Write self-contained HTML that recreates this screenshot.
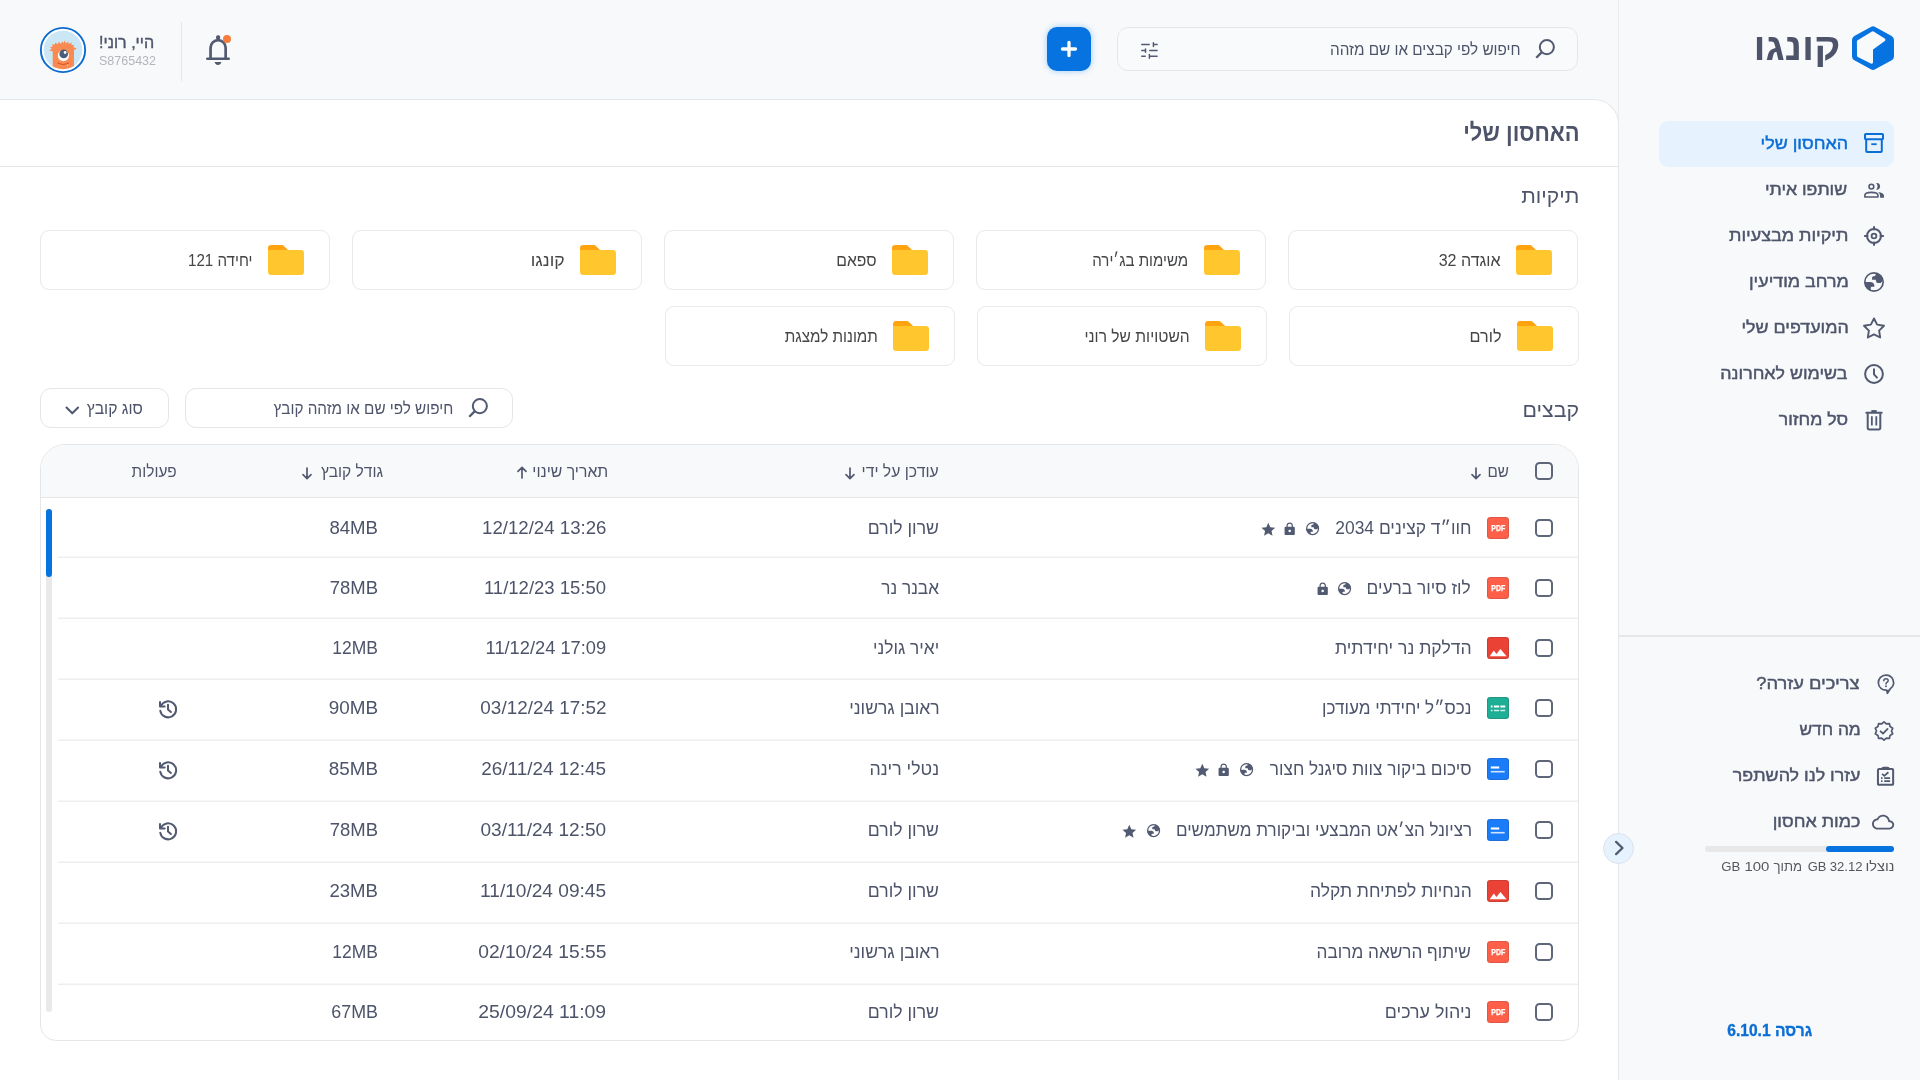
<!DOCTYPE html>
<html lang="he"><head><meta charset="utf-8"><title>קונגו</title>
<style>
html,body{margin:0;padding:0}
html{overflow:hidden;width:1920px;height:1080px}
body{width:1920px;height:1080px;overflow:hidden;position:relative;background:#f8f9fb;font-family:"Liberation Sans",sans-serif;direction:rtl;color:#4d546a}
svg{display:block;overflow:visible}
</style></head><body><div style="position:absolute;left:0;top:0;width:1920px;height:1080px;overflow:hidden;will-change:transform;filter:blur(0.4px)">
<div style="position:absolute;left:1618px;top:0px;width:1px;height:1080px;background:#ebecee"></div>
<div style="position:absolute;left:0;top:99px;width:1619px;height:981px;background:#fff;border:1px solid #e5e6e8;border-left:none;border-bottom:none;border-top-right-radius:25px;box-sizing:border-box"></div>
<div style="position:absolute;left:0px;top:166px;width:1618px;height:1px;background:#e5e6e8"></div>
<svg style="position:absolute;left:1852px;top:25.8px;" width="42" height="44.2" viewBox="0 0 42 44.200"><path d="M21.00 4.84 L37.50 13.96 L37.50 30.24 L21.00 39.36 L4.50 30.24 L4.50 13.96 Z" fill="#0673e1" stroke="#0673e1" stroke-width="9" stroke-linejoin="round"/><path d="M20.79 6.77 L31.92 13.78 L19.50 22.73 L19.50 36.17 L6.49 29.67 L6.41 15.63 Z" fill="#f8f9fb" stroke="#f8f9fb" stroke-width="3" stroke-linejoin="round"/></svg>
<span style="position:absolute;top:28.02px;font-size:38px;line-height:38px;white-space:nowrap;color:#4d546a;font-weight:700;right:79.69px;transform:scaleX(1.0545);transform-origin:right center">קונגו</span>
<div style="position:absolute;left:1659px;top:121px;width:235px;height:46px;background:#e6f2fe;border-radius:9px"></div>
<span style="position:absolute;top:136.02px;font-size:16.6px;line-height:16.6px;white-space:nowrap;color:#0b6ed6;-webkit-text-stroke:0.45px #0b6ed6;right:71.62px;transform:scaleX(1.0800);transform-origin:right center">האחסון שלי</span>
<span style="position:absolute;top:182.03px;font-size:16.6px;line-height:16.6px;white-space:nowrap;color:#4d546a;-webkit-text-stroke:0.45px #4d546a;right:72.70px;transform:scaleX(1.0658);transform-origin:right center">שותפו איתי</span>
<span style="position:absolute;top:228.02px;font-size:16.6px;line-height:16.6px;white-space:nowrap;color:#4d546a;-webkit-text-stroke:0.45px #4d546a;right:71.62px;transform:scaleX(1.0817);transform-origin:right center">תיקיות מבצעיות</span>
<span style="position:absolute;top:274.02px;font-size:16.6px;line-height:16.6px;white-space:nowrap;color:#4d546a;-webkit-text-stroke:0.45px #4d546a;right:71.62px;transform:scaleX(1.0758);transform-origin:right center">מרחב מודיעין</span>
<span style="position:absolute;top:320.02px;font-size:16.6px;line-height:16.6px;white-space:nowrap;color:#4d546a;-webkit-text-stroke:0.45px #4d546a;right:71.62px;transform:scaleX(1.0755);transform-origin:right center">המועדפים שלי</span>
<span style="position:absolute;top:366.02px;font-size:16.6px;line-height:16.6px;white-space:nowrap;color:#4d546a;-webkit-text-stroke:0.45px #4d546a;right:72.70px;transform:scaleX(1.0737);transform-origin:right center">בשימוש לאחרונה</span>
<span style="position:absolute;top:412.03px;font-size:16.6px;line-height:16.6px;white-space:nowrap;color:#4d546a;-webkit-text-stroke:0.45px #4d546a;right:71.83px;transform:scaleX(1.0646);transform-origin:right center">סל מחזור</span>
<svg style="position:absolute;left:1864px;top:133px;" width="20" height="20" viewBox="0 0 20 20"><rect x="1" y="1" width="18" height="5.2" rx="0.8" fill="none" stroke="#0b6ed6" stroke-width="2"/><path d="M2.2 6.2 V18 Q2.2 19 3.2 19 H16.8 Q17.8 19 17.8 18 V6.2" fill="none" stroke="#0b6ed6" stroke-width="2"/><path d="M7.3 11.2 H12.7" stroke="#0b6ed6" stroke-width="1.8"/></svg>
<svg style="position:absolute;left:1864px;top:183px;" width="20" height="15" viewBox="0 0 20 15"><circle cx="12.700" cy="3.350" r="3.350" fill="#525a71"/><circle cx="8.600" cy="3.350" r="4.900" fill="#f8f9fb"/><circle cx="7.400" cy="3.600" r="2.400" fill="none" stroke="#525a71" stroke-width="1.600"/><path d="M0.800 14 V12.400 Q0.800 9.400 7.400 9.400 Q14 9.400 14 12.400 V14 Z" fill="none" stroke="#525a71" stroke-width="1.600" stroke-linejoin="round"/><path d="M14.200 9.100 Q19.600 9.600 20 12.800 V14.700 H16.100 V12.800 Q16.100 10.600 14.200 9.100 Z" fill="#525a71"/></svg>
<svg style="position:absolute;left:1864px;top:226px;" width="20" height="20" viewBox="0 0 20 20"><circle cx="10" cy="10" r="7" fill="none" stroke="#525a71" stroke-width="2"/><circle cx="10" cy="10" r="2.4" fill="none" stroke="#525a71" stroke-width="1.8"/><path d="M10 0.900 V3.600 M10 16.400 V19.100 M0.900 10 H3.600 M16.400 10 H19.100" stroke="#525a71" stroke-width="2" stroke-linecap="round"/></svg>
<svg style="position:absolute;left:1864px;top:272px;" width="20" height="20" viewBox="0 0 20 20"><clipPath id="gc1"><circle cx="10" cy="10" r="9.600"/></clipPath><circle cx="10" cy="10" r="9.175" fill="none" stroke="#525a71" stroke-width="1.65"/><g clip-path="url(#gc1)" fill="#525a71"><path d="M12.300 -1 L11.500 2.900 Q11.200 4.100 10 4.150 L9.400 4.200 Q8.100 4.400 8.050 5.800 V7.800 H11.800 L12 9.300 Q12.300 10.900 13.700 10.900 H16.800 L21 6 V-1 Z"/><path d="M-1 10.100 H6.700 Q9.600 10.100 10.200 12.600 L10.450 14.750 H8 Q6.850 14.800 6.800 16 L6.700 21 H-1 Z"/></g></svg>
<svg style="position:absolute;left:1861px;top:314.6px;" width="26" height="26" viewBox="0 0 24 24"><path fill="none" stroke="#525a71" stroke-width="1.750" stroke-linejoin="round" d="M12.00 3.20 L14.91 8.90 L21.23 9.90 L16.71 14.43 L17.70 20.75 L12.00 17.85 L6.30 20.75 L7.29 14.43 L2.77 9.90 L9.09 8.90 Z"/></svg>
<svg style="position:absolute;left:1864px;top:364px;" width="20" height="20" viewBox="0 0 20 20"><circle cx="10" cy="10" r="8.9" fill="none" stroke="#525a71" stroke-width="2"/><path d="M10 5.2 V10.3 L13 13.6" fill="none" stroke="#525a71" stroke-width="2" stroke-linecap="round" stroke-linejoin="round"/></svg>
<svg style="position:absolute;left:1864px;top:409.5px;" width="20" height="20.5" viewBox="0 0 20 20.500"><path d="M7.300 1.100 H12.700" stroke="#525a71" stroke-width="2"/><path d="M2.300 2.750 H17.700" stroke="#525a71" stroke-width="1.900" stroke-linecap="round"/><path d="M3.700 3.200 V17.700 Q3.700 19.400 5.400 19.400 H14.600 Q16.300 19.400 16.300 17.700 V3.200" fill="none" stroke="#525a71" stroke-width="2"/><path d="M7.850 6.300 V15.500 M12.300 6.300 V15.500" stroke="#525a71" stroke-width="1.800"/></svg>
<div style="position:absolute;left:1619px;top:635px;width:301px;height:2px;background:#e4e6ea"></div>
<span style="position:absolute;top:676.02px;font-size:16.6px;line-height:16.6px;white-space:nowrap;color:#4d546a;-webkit-text-stroke:0.45px #4d546a;right:60.30px;transform:scaleX(1.1047);transform-origin:right center">צריכים עזרה?</span>
<span style="position:absolute;top:722.03px;font-size:16.6px;line-height:16.6px;white-space:nowrap;color:#4d546a;-webkit-text-stroke:0.45px #4d546a;right:59.26px;transform:scaleX(1.0431);transform-origin:right center">מה חדש</span>
<span style="position:absolute;top:768.02px;font-size:16.6px;line-height:16.6px;white-space:nowrap;color:#4d546a;-webkit-text-stroke:0.45px #4d546a;right:59.53px;transform:scaleX(1.0779);transform-origin:right center">עזרו לנו להשתפר</span>
<span style="position:absolute;top:814.02px;font-size:16.6px;line-height:16.6px;white-space:nowrap;color:#4d546a;-webkit-text-stroke:0.45px #4d546a;right:59.48px;transform:scaleX(1.0781);transform-origin:right center">כמות אחסון</span>
<svg style="position:absolute;left:1876.5px;top:673.5px;" width="18" height="21" viewBox="0 0 18 21"><path d="M9 1.100 A7.500 7.500 0 1 0 9.700 16.050 L10.400 19.300 L13.300 14.750 A7.500 7.500 0 0 0 9 1.100 Z" fill="none" stroke="#525a71" stroke-width="1.700" stroke-linejoin="round"/><path d="M9.900 16.300 L10.400 19.200 L12.900 15.200 Z" fill="#525a71"/><path d="M6.800 6.700 Q6.900 4.700 9 4.700 Q11.200 4.700 11.200 6.500 Q11.200 7.600 9.900 8.400 Q9 9 9 10.100" fill="none" stroke="#525a71" stroke-width="1.500" stroke-linecap="round"/><circle cx="9" cy="12.300" r="0.950" fill="#525a71"/></svg>
<svg style="position:absolute;left:1874px;top:720.5px;" width="20" height="20" viewBox="0 0 20 20"><path d="M10.00 0.80 L12.32 2.87 L15.41 2.56 L16.07 5.59 L18.75 7.16 L17.50 10.00 L18.75 12.84 L16.07 14.41 L15.41 17.44 L12.32 17.13 L10.00 19.20 L7.68 17.13 L4.59 17.44 L3.93 14.41 L1.25 12.84 L2.50 10.00 L1.25 7.16 L3.93 5.59 L4.59 2.56 L7.68 2.87 Z" fill="none" stroke="#525a71" stroke-width="1.7" stroke-linejoin="round"/><path d="M6.600 10.300 L9 12.600 L13.600 7.900" fill="none" stroke="#525a71" stroke-width="1.8" stroke-linecap="round" stroke-linejoin="round"/></svg>
<svg style="position:absolute;left:1877px;top:765.7px;" width="17.1" height="20.3" viewBox="0 0 18 20.5"><rect x="1" y="2.800" width="16" height="16.600" rx="1" fill="none" stroke="#525a71" stroke-width="2.100"/><path d="M4.600 2.400 Q4.600 0.300 6.800 0.300 H11.200 Q13.400 0.300 13.400 2.400 V3.900 H4.600 Z" fill="#525a71"/><path d="M5.400 7.900 L7.600 9.900 L12 6.100" fill="none" stroke="#525a71" stroke-width="1.900"/><path d="M4.200 12.300 H5.800 M7.600 12.300 H13.800 M4.200 15.500 H5.800 M7.600 15.500 H13.800" stroke="#525a71" stroke-width="1.700"/></svg>
<svg style="position:absolute;left:1872px;top:811.2px;" width="22.2" height="22.2" viewBox="0 0 24 24"><path fill="#525a71" d="M19.35 10.04C18.67 6.59 15.64 4 12 4 9.11 4 6.6 5.64 5.35 8.04 2.34 8.36 0 10.91 0 14c0 3.31 2.69 6 6 6h13c2.76 0 5-2.24 5-5 0-2.64-2.05-4.78-4.65-4.96zM19 18H6c-2.21 0-4-1.79-4-4 0-2.05 1.53-3.76 3.56-3.97l1.07-.11.5-.95C8.08 7.14 9.94 6 12 6c2.62 0 4.88 1.86 5.39 4.43l.3 1.5 1.53.11c1.56.1 2.78 1.41 2.78 2.96 0 1.65-1.35 3-3 3z"/></svg>
<div style="position:absolute;left:1705px;top:846px;width:189px;height:6px;background:#e8e8e8;border-radius:3px"></div>
<div style="position:absolute;left:1826px;top:846px;width:68px;height:6px;background:#0673e1;border-radius:3px"></div>
<span style="position:absolute;top:860.03px;font-size:13.4px;line-height:13.4px;white-space:nowrap;color:#55575c;right:25.41px;transform:scaleX(1.0921);transform-origin:right center">נוצלו</span>
<span style="position:absolute;top:860.03px;font-size:13.4px;line-height:13.4px;white-space:nowrap;color:#55575c;direction:ltr;right:57.04px;transform:scaleX(0.9805);transform-origin:right center">32.12</span>
<span style="position:absolute;top:860.03px;font-size:13.4px;line-height:13.4px;white-space:nowrap;color:#55575c;direction:ltr;right:93.58px;transform:scaleX(0.9644);transform-origin:right center">GB</span>
<span style="position:absolute;top:860.03px;font-size:13.4px;line-height:13.4px;white-space:nowrap;color:#55575c;right:117.77px;transform:scaleX(0.9821);transform-origin:right center">מתוך</span>
<span style="position:absolute;top:860.03px;font-size:13.4px;line-height:13.4px;white-space:nowrap;color:#55575c;direction:ltr;right:150.31px;transform:scaleX(1.1154);transform-origin:right center">100</span>
<span style="position:absolute;top:860.03px;font-size:13.4px;line-height:13.4px;white-space:nowrap;color:#55575c;direction:ltr;right:179.41px;transform:scaleX(0.9837);transform-origin:right center">GB</span>
<div style="position:absolute;left:1603px;top:832.5px;width:31px;height:31px;border-radius:50%;background:#e6f2fe;border:1px solid #dde2e9;box-sizing:border-box"></div>
<svg style="position:absolute;left:1608.5px;top:838px;" width="20" height="20" viewBox="0 0 20 20"><path d="M7.100 3.900 L13.500 10 L7.100 16.100" fill="none" stroke="#525a71" stroke-width="2.300" stroke-linecap="round" stroke-linejoin="round"/></svg>
<span style="position:absolute;top:1023.03px;font-size:16px;line-height:16px;white-space:nowrap;color:#0b6ed6;font-weight:700;-webkit-text-stroke:0.35px #0b6ed6;right:107.50px;transform:scaleX(0.9741);transform-origin:right center">גרסה 6.10.1</span>
<div style="position:absolute;left:1117px;top:27px;width:461px;height:44px;border:1px solid #e5e6e8;border-radius:11px;box-sizing:border-box;background:#f9fafc"></div>
<svg style="position:absolute;left:1534px;top:36.8px;" width="24" height="24" viewBox="0 0 24 24"><circle cx="12.850" cy="10.100" r="7.050" fill="none" stroke="#525a71" stroke-width="2"/><path d="M7.900 15.100 L2.250 20.750" stroke="#525a71" stroke-width="2.300" stroke-linecap="butt"/></svg>
<span style="position:absolute;top:42.03px;font-size:16px;line-height:16px;white-space:nowrap;color:#4d546a;right:399.65px;transform:scaleX(0.9548);transform-origin:right center">חיפוש לפי קבצים או שם מזהה</span>
<svg style="position:absolute;left:1140px;top:41px;" width="19" height="19" viewBox="0 0 19 19"><path d="M1.800 3.400 H9.200 M13.400 3.400 H17.100 M13.400 1.800 V5.400 M1.800 9.400 H5.500 M5.500 8 V11.200 M9.750 9.400 H17.100 M1.800 15.300 H5.200 M9.400 13.600 V17.150 M9.400 15.300 H17.100" fill="none" stroke="#525a71" stroke-width="1.500" stroke-linecap="round"/></svg>
<div style="position:absolute;left:1047px;top:27px;width:44px;height:44px;border-radius:10px;background:#0673e1;box-shadow:0 0 6px 0 rgba(30,140,245,.42)"></div>
<svg style="position:absolute;left:1059px;top:39px;" width="20" height="20" viewBox="0 0 20 20"><path d="M10 3.500 V16.500 M3.500 10 H16.500" stroke="#fff" stroke-width="3.300" stroke-linecap="round"/></svg>
<svg style="position:absolute;left:204px;top:33px;" width="28" height="34" viewBox="0 0 28 34"><path d="M6.550 25.500 V14.700 A7.550 7.550 0 0 1 21.650 14.700 V25.500" fill="none" stroke="#525a71" stroke-width="2.700"/><path d="M3.350 25.750 H24.650" stroke="#525a71" stroke-width="2.700" stroke-linecap="round"/><rect x="12.050" y="2.200" width="4.100" height="4.600" rx="1.700" fill="#525a71"/><path d="M10.600 29 H17.400 Q16.600 31.900 14 31.900 Q11.400 31.900 10.600 29 Z" fill="#525a71"/></svg>
<div style="position:absolute;left:223px;top:35px;width:8px;height:8px;border-radius:50%;background:#f67d3c"></div>
<div style="position:absolute;left:180.5px;top:22px;width:1.5px;height:59px;background:#e4e6ea"></div>
<span style="position:absolute;top:34.02px;font-size:17px;line-height:17px;white-space:nowrap;color:#4d546a;-webkit-text-stroke:0.4px #4d546a;left:99.05px;transform:scaleX(0.9462);transform-origin:left center">היי, רוני!</span>
<span style="position:absolute;top:55.04px;font-size:12.2px;line-height:12.2px;white-space:nowrap;color:#b3b5bb;direction:ltr;left:99.34px;transform:scaleX(1.0257);transform-origin:left center">S8765432</span>
<svg style="position:absolute;left:40px;top:27px;" width="46" height="46" viewBox="0 0 46 46"><circle cx="23" cy="23" r="22.150" fill="#fff" stroke="#0b6ad2" stroke-width="1.900"/><circle cx="23" cy="23" r="19.300" fill="#cbe6f5"/><clipPath id="avc"><circle cx="23" cy="23" r="19.300"/></clipPath><g clip-path="url(#avc)"><path d="M12.700 46 V24.200 L9.200 23.600 L11.900 21.700 L9.800 20.200 L12.800 19.500 L11.900 17.400 L14.800 17.600 L15.300 15.400 L17.600 17.200 L18.800 14.800 L20.700 16.900 L22.300 14.200 L23.600 16.600 L24.500 13.200 L25.900 16.500 L28.100 14.500 L28.700 17 L31.600 15.600 L31.500 18.200 L34 17.800 L33.300 20 L36.800 21.800 L34 23 V46 Z" fill="#f98a51"/><circle cx="23.400" cy="28.600" r="5.600" fill="#fff"/><circle cx="23.700" cy="26.900" r="4.300" fill="#4a5d78"/><circle cx="25.100" cy="25.500" r="1.400" fill="#fff"/><path d="M17.900 36.100 Q23 38.900 28.700 36.100" fill="none" stroke="#e2512a" stroke-width="1.100" stroke-linecap="round"/><circle cx="27.500" cy="38.300" r="0.700" fill="#fbd9a5"/></g></svg>
<span style="position:absolute;top:121.03px;font-size:24.2px;line-height:24.2px;white-space:nowrap;color:#4d546a;font-weight:700;right:340.55px;transform:scaleX(0.9049);transform-origin:right center">האחסון שלי</span>
<span style="position:absolute;top:186.03px;font-size:20.8px;line-height:20.8px;white-space:nowrap;color:#4d546a;right:340.38px;transform:scaleX(1.0126);transform-origin:right center">תיקיות</span>
<span style="position:absolute;top:400.03px;font-size:20.8px;line-height:20.8px;white-space:nowrap;color:#4d546a;right:341.17px;transform:scaleX(1.0272);transform-origin:right center">קבצים</span>
<div style="position:absolute;left:1288px;top:230px;width:290px;height:60px;border:1px solid #e8e9ec;border-radius:9px;box-sizing:border-box;background:#fff"></div>
<svg style="position:absolute;left:1516px;top:245px;" width="36" height="30" viewBox="0 0 36 30"><path d="M0 3.300 Q0 0 3.300 0 H13.800 Q15 0 15.900 0.900 L20.500 5.600 H0 Z" fill="#ffa30f"/><path d="M0 5 H32.700 Q36 5 36 8.300 V26.700 Q36 30 32.700 30 H3.300 Q0 30 0 26.700 Z" fill="#ffc62d"/></svg>
<span style="position:absolute;top:252.02px;font-size:17px;line-height:17px;white-space:nowrap;color:#444547;right:419.84px;transform:scaleX(0.9439);transform-origin:right center">אוגדה 32</span>
<div style="position:absolute;left:976px;top:230px;width:290px;height:60px;border:1px solid #e8e9ec;border-radius:9px;box-sizing:border-box;background:#fff"></div>
<svg style="position:absolute;left:1204px;top:245px;" width="36" height="30" viewBox="0 0 36 30"><path d="M0 3.300 Q0 0 3.300 0 H13.800 Q15 0 15.900 0.900 L20.500 5.600 H0 Z" fill="#ffa30f"/><path d="M0 5 H32.700 Q36 5 36 8.300 V26.700 Q36 30 32.700 30 H3.300 Q0 30 0 26.700 Z" fill="#ffc62d"/></svg>
<span style="position:absolute;top:252.02px;font-size:17px;line-height:17px;white-space:nowrap;color:#444547;right:731.61px;transform:scaleX(0.8868);transform-origin:right center">משימות בג׳ירה</span>
<div style="position:absolute;left:664px;top:230px;width:290px;height:60px;border:1px solid #e8e9ec;border-radius:9px;box-sizing:border-box;background:#fff"></div>
<svg style="position:absolute;left:892px;top:245px;" width="36" height="30" viewBox="0 0 36 30"><path d="M0 3.300 Q0 0 3.300 0 H13.800 Q15 0 15.900 0.900 L20.500 5.600 H0 Z" fill="#ffa30f"/><path d="M0 5 H32.700 Q36 5 36 8.300 V26.700 Q36 30 32.700 30 H3.300 Q0 30 0 26.700 Z" fill="#ffc62d"/></svg>
<span style="position:absolute;top:252.02px;font-size:17px;line-height:17px;white-space:nowrap;color:#444547;right:1043.57px;transform:scaleX(0.9254);transform-origin:right center">ספאם</span>
<div style="position:absolute;left:352px;top:230px;width:290px;height:60px;border:1px solid #e8e9ec;border-radius:9px;box-sizing:border-box;background:#fff"></div>
<svg style="position:absolute;left:580px;top:245px;" width="36" height="30" viewBox="0 0 36 30"><path d="M0 3.300 Q0 0 3.300 0 H13.800 Q15 0 15.900 0.900 L20.500 5.600 H0 Z" fill="#ffa30f"/><path d="M0 5 H32.700 Q36 5 36 8.300 V26.700 Q36 30 32.700 30 H3.300 Q0 30 0 26.700 Z" fill="#ffc62d"/></svg>
<span style="position:absolute;top:252.02px;font-size:17px;line-height:17px;white-space:nowrap;color:#444547;right:1355.49px;transform:scaleX(1.0386);transform-origin:right center">קונגו</span>
<div style="position:absolute;left:40px;top:230px;width:290px;height:60px;border:1px solid #e8e9ec;border-radius:9px;box-sizing:border-box;background:#fff"></div>
<svg style="position:absolute;left:268px;top:245px;" width="36" height="30" viewBox="0 0 36 30"><path d="M0 3.300 Q0 0 3.300 0 H13.800 Q15 0 15.900 0.900 L20.500 5.600 H0 Z" fill="#ffa30f"/><path d="M0 5 H32.700 Q36 5 36 8.300 V26.700 Q36 30 32.700 30 H3.300 Q0 30 0 26.700 Z" fill="#ffc62d"/></svg>
<span style="position:absolute;top:252.02px;font-size:17px;line-height:17px;white-space:nowrap;color:#444547;right:1667.13px;transform:scaleX(0.8900);transform-origin:right center">יחידה 121</span>
<div style="position:absolute;left:1289px;top:306px;width:290px;height:60px;border:1px solid #e8e9ec;border-radius:9px;box-sizing:border-box;background:#fff"></div>
<svg style="position:absolute;left:1517px;top:321px;" width="36" height="30" viewBox="0 0 36 30"><path d="M0 3.300 Q0 0 3.300 0 H13.800 Q15 0 15.900 0.900 L20.500 5.600 H0 Z" fill="#ffa30f"/><path d="M0 5 H32.700 Q36 5 36 8.300 V26.700 Q36 30 32.700 30 H3.300 Q0 30 0 26.700 Z" fill="#ffc62d"/></svg>
<span style="position:absolute;top:328.02px;font-size:17px;line-height:17px;white-space:nowrap;color:#444547;right:418.64px;transform:scaleX(0.9531);transform-origin:right center">לורם</span>
<div style="position:absolute;left:977px;top:306px;width:290px;height:60px;border:1px solid #e8e9ec;border-radius:9px;box-sizing:border-box;background:#fff"></div>
<svg style="position:absolute;left:1205px;top:321px;" width="36" height="30" viewBox="0 0 36 30"><path d="M0 3.300 Q0 0 3.300 0 H13.800 Q15 0 15.900 0.900 L20.500 5.600 H0 Z" fill="#ffa30f"/><path d="M0 5 H32.700 Q36 5 36 8.300 V26.700 Q36 30 32.700 30 H3.300 Q0 30 0 26.700 Z" fill="#ffc62d"/></svg>
<span style="position:absolute;top:328.02px;font-size:17px;line-height:17px;white-space:nowrap;color:#444547;right:730.58px;transform:scaleX(0.9171);transform-origin:right center">השטויות של רוני</span>
<div style="position:absolute;left:665px;top:306px;width:290px;height:60px;border:1px solid #e8e9ec;border-radius:9px;box-sizing:border-box;background:#fff"></div>
<svg style="position:absolute;left:893px;top:321px;" width="36" height="30" viewBox="0 0 36 30"><path d="M0 3.300 Q0 0 3.300 0 H13.800 Q15 0 15.900 0.900 L20.500 5.600 H0 Z" fill="#ffa30f"/><path d="M0 5 H32.700 Q36 5 36 8.300 V26.700 Q36 30 32.700 30 H3.300 Q0 30 0 26.700 Z" fill="#ffc62d"/></svg>
<span style="position:absolute;top:328.02px;font-size:17px;line-height:17px;white-space:nowrap;color:#444547;right:1042.60px;transform:scaleX(0.8976);transform-origin:right center">תמונות למצגת</span>
<div style="position:absolute;left:185px;top:388px;width:328px;height:40px;border:1px solid #e5e6e8;border-radius:11px;box-sizing:border-box;background:#fff"></div>
<svg style="position:absolute;left:466.8px;top:395.8px;" width="24" height="24" viewBox="0 0 24 24"><circle cx="12.850" cy="10.100" r="7.050" fill="none" stroke="#525a71" stroke-width="2"/><path d="M7.900 15.100 L2.250 20.750" stroke="#525a71" stroke-width="2.300" stroke-linecap="butt"/></svg>
<span style="position:absolute;top:400.03px;font-size:16.5px;line-height:16.5px;white-space:nowrap;color:#4d546a;right:1466.78px;transform:scaleX(0.9248);transform-origin:right center">חיפוש לפי שם או מזהה קובץ</span>
<div style="position:absolute;left:40px;top:388px;width:129px;height:40px;border:1px solid #e5e6e8;border-radius:11px;box-sizing:border-box;background:#fff"></div>
<span style="position:absolute;top:401.03px;font-size:16.8px;line-height:16.8px;white-space:nowrap;color:#4d546a;right:1776.84px;transform:scaleX(0.9371);transform-origin:right center">סוג קובץ</span>
<svg style="position:absolute;left:63px;top:401px;" width="18" height="18" viewBox="0 0 18 18"><path d="M3.500 6.600 L9.300 12.300 L15.100 6.600" fill="none" stroke="#525a71" stroke-width="2.100" stroke-linecap="round" stroke-linejoin="round"/></svg>
<div style="position:absolute;left:40px;top:444px;width:1539px;height:597px;border:1px solid #e5e6e8;border-radius:25px 25px 16px 16px;box-sizing:border-box;background:#fff;overflow:hidden"><div style="position:absolute;left:0;top:0;width:100%;height:52px;background:#f8f9fb;border-bottom:1px solid #e5e6e8"></div></div>
<div style="position:absolute;left:1535px;top:462px;width:18px;height:18px;border:2px solid #5f6679;border-radius:4.600px;box-sizing:border-box"></div>
<span style="position:absolute;top:463.03px;font-size:16.3px;line-height:16.3px;white-space:nowrap;color:#4d546a;right:410.68px;transform:scaleX(0.9349);transform-origin:right center">שם</span>
<svg style="position:absolute;left:1470.5px;top:466.5px;" width="10" height="13" viewBox="0 0 10 13"><path d="M5 1 V11.400 M1 7.600 L5 11.600 L9 7.600" fill="none" stroke="#525a71" stroke-width="1.700" stroke-linecap="round" stroke-linejoin="round"/></svg>
<span style="position:absolute;top:463.03px;font-size:16.3px;line-height:16.3px;white-space:nowrap;color:#4d546a;right:980.87px;transform:scaleX(0.9678);transform-origin:right center">עודכן על ידי</span>
<svg style="position:absolute;left:845.4px;top:466.5px;" width="10" height="13" viewBox="0 0 10 13"><path d="M5 1 V11.400 M1 7.600 L5 11.600 L9 7.600" fill="none" stroke="#525a71" stroke-width="1.700" stroke-linecap="round" stroke-linejoin="round"/></svg>
<span style="position:absolute;top:463.03px;font-size:16.3px;line-height:16.3px;white-space:nowrap;color:#4d546a;right:1311.33px;transform:scaleX(0.9697);transform-origin:right center">תאריך שינוי</span>
<svg style="position:absolute;left:516.6px;top:466px;" width="10" height="13" viewBox="0 0 10 13"><path d="M5 12 V1.600 M1 5.400 L5 1.400 L9 5.400" fill="none" stroke="#525a71" stroke-width="1.700" stroke-linecap="round" stroke-linejoin="round"/></svg>
<span style="position:absolute;top:463.03px;font-size:16.3px;line-height:16.3px;white-space:nowrap;color:#4d546a;right:1537.28px;transform:scaleX(0.9557);transform-origin:right center">גודל קובץ</span>
<svg style="position:absolute;left:302.3px;top:466.5px;" width="10" height="13" viewBox="0 0 10 13"><path d="M5 1 V11.400 M1 7.600 L5 11.600 L9 7.600" fill="none" stroke="#525a71" stroke-width="1.700" stroke-linecap="round" stroke-linejoin="round"/></svg>
<span style="position:absolute;top:463.03px;font-size:16.3px;line-height:16.3px;white-space:nowrap;color:#4d546a;right:1742.77px;transform:scaleX(0.9454);transform-origin:right center">פעולות</span>
<div style="position:absolute;left:46px;top:509px;width:6px;height:503px;background:#e9e9ea;border-radius:3px"></div>
<div style="position:absolute;left:46px;top:509px;width:6px;height:68px;background:#0673e1;border-radius:3px"></div>
<div style="position:absolute;left:58px;top:556px;width:1520px;height:1px;background:#f7f7f8"></div>
<div style="position:absolute;left:58px;top:557px;width:1520px;height:1px;background:#eeeef0"></div>
<div style="position:absolute;left:58px;top:617px;width:1520px;height:1px;background:#f7f7f8"></div>
<div style="position:absolute;left:58px;top:618px;width:1520px;height:1px;background:#eeeef0"></div>
<div style="position:absolute;left:58px;top:678px;width:1520px;height:1px;background:#f7f7f8"></div>
<div style="position:absolute;left:58px;top:679px;width:1520px;height:1px;background:#eeeef0"></div>
<div style="position:absolute;left:58px;top:739px;width:1520px;height:1px;background:#f7f7f8"></div>
<div style="position:absolute;left:58px;top:740px;width:1520px;height:1px;background:#eeeef0"></div>
<div style="position:absolute;left:58px;top:800px;width:1520px;height:1px;background:#f7f7f8"></div>
<div style="position:absolute;left:58px;top:801px;width:1520px;height:1px;background:#eeeef0"></div>
<div style="position:absolute;left:58px;top:861px;width:1520px;height:1px;background:#f7f7f8"></div>
<div style="position:absolute;left:58px;top:862px;width:1520px;height:1px;background:#eeeef0"></div>
<div style="position:absolute;left:58px;top:922px;width:1520px;height:1px;background:#f7f7f8"></div>
<div style="position:absolute;left:58px;top:923px;width:1520px;height:1px;background:#eeeef0"></div>
<div style="position:absolute;left:58px;top:983px;width:1520px;height:1px;background:#f7f7f8"></div>
<div style="position:absolute;left:58px;top:984px;width:1520px;height:1px;background:#eeeef0"></div>
<div style="position:absolute;left:1535px;top:519px;width:18px;height:18px;border:2px solid #5f6679;border-radius:4.600px;box-sizing:border-box"></div>
<div style="position:absolute;left:1487px;top:517px;width:22px;height:22px;border-radius:3.500px;background:#fd5f49;box-shadow:inset 0 0 0 1px rgba(120,60,50,.22)"></div>
<span style="position:absolute;top:525.03px;font-size:8.2px;line-height:8.2px;white-space:nowrap;color:#fff;font-weight:700;-webkit-text-stroke:0.25px #fff;direction:ltr;right:414.80px;transform:scaleX(0.8562);transform-origin:right center">PDF</span>
<span style="position:absolute;top:520.02px;font-size:17.6px;line-height:17.6px;white-space:nowrap;color:#4d546a;right:448.81px;transform:scaleX(0.9908);transform-origin:right center">חוו״ד קצינים 2034</span>
<svg style="position:absolute;left:1305.9px;top:521.8px;" width="13.2" height="13.2" viewBox="0 0 20 20"><clipPath id="gc2"><circle cx="10" cy="10" r="9.600"/></clipPath><circle cx="10" cy="10" r="9.05" fill="none" stroke="#525a71" stroke-width="1.9"/><g clip-path="url(#gc2)" fill="#525a71"><path d="M12.300 -1 L11.500 2.900 Q11.200 4.100 10 4.150 L9.400 4.200 Q8.100 4.400 8.050 5.800 V7.800 H11.800 L12 9.300 Q12.300 10.900 13.700 10.900 H16.800 L21 6 V-1 Z"/><path d="M-1 10.100 H6.700 Q9.600 10.100 10.200 12.600 L10.450 14.750 H8 Q6.850 14.800 6.800 16 L6.700 21 H-1 Z"/></g></svg>
<svg style="position:absolute;left:1282.4px;top:521.55px" width="15.400" height="14.300" viewBox="0 0 24 24" preserveAspectRatio="none"><path fill="#525a71" d="M18 8h-1V6c0-2.76-2.24-5-5-5S7 3.240 7 6v2H6c-1.100 0-2 .9-2 2v10c0 1.100.9 2 2 2h12c1.100 0 2-.9 2-2V10c0-1.100-.9-2-2-2zm-6 9c-1.100 0-2-.9-2-2s.9-2 2-2 2 .9 2 2-.9 2-2 2zm3.100-9H8.900V6c0-1.710 1.390-3.100 3.100-3.100 1.710 0 3.100 1.390 3.100 3.100v2z"/></svg>
<svg style="position:absolute;left:1260.1px;top:520.85px;" width="16.6" height="16.6" viewBox="0 0 24 24"><path fill="#525a71" d="M12.00 2.50 L14.88 8.94 L21.89 9.69 L16.66 14.41 L18.11 21.31 L12.00 17.80 L5.89 21.31 L7.34 14.41 L2.11 9.69 L9.12 8.94z"/></svg>
<span style="position:absolute;top:520.02px;font-size:17.6px;line-height:17.6px;white-space:nowrap;color:#4d546a;right:980.98px;transform:scaleX(1.0034);transform-origin:right center">שרון לורם</span>
<span style="position:absolute;top:520.02px;font-size:17.6px;line-height:17.6px;white-space:nowrap;color:#4d546a;direction:ltr;right:1313.76px;transform:scaleX(1.0592);transform-origin:right center">12/12/24 13:26</span>
<span style="position:absolute;top:520.02px;font-size:17.6px;line-height:17.6px;white-space:nowrap;color:#4d546a;direction:ltr;right:1541.66px;transform:scaleX(1.0568);transform-origin:right center">84MB</span>
<div style="position:absolute;left:1535px;top:579px;width:18px;height:18px;border:2px solid #5f6679;border-radius:4.600px;box-sizing:border-box"></div>
<div style="position:absolute;left:1487px;top:577px;width:22px;height:22px;border-radius:3.500px;background:#fd5f49;box-shadow:inset 0 0 0 1px rgba(120,60,50,.22)"></div>
<span style="position:absolute;top:585.03px;font-size:8.2px;line-height:8.2px;white-space:nowrap;color:#fff;font-weight:700;-webkit-text-stroke:0.25px #fff;direction:ltr;right:414.80px;transform:scaleX(0.8562);transform-origin:right center">PDF</span>
<span style="position:absolute;top:580.02px;font-size:17.6px;line-height:17.6px;white-space:nowrap;color:#4d546a;right:448.96px;transform:scaleX(0.9855);transform-origin:right center">לוז סיור ברעים</span>
<svg style="position:absolute;left:1337.8px;top:581.8px;" width="13.2" height="13.2" viewBox="0 0 20 20"><clipPath id="gc3"><circle cx="10" cy="10" r="9.600"/></clipPath><circle cx="10" cy="10" r="9.05" fill="none" stroke="#525a71" stroke-width="1.9"/><g clip-path="url(#gc3)" fill="#525a71"><path d="M12.300 -1 L11.500 2.900 Q11.200 4.100 10 4.150 L9.400 4.200 Q8.100 4.400 8.050 5.800 V7.800 H11.800 L12 9.300 Q12.300 10.900 13.700 10.900 H16.800 L21 6 V-1 Z"/><path d="M-1 10.100 H6.700 Q9.600 10.100 10.200 12.600 L10.450 14.750 H8 Q6.850 14.800 6.800 16 L6.700 21 H-1 Z"/></g></svg>
<svg style="position:absolute;left:1314.5px;top:581.55px" width="15.400" height="14.300" viewBox="0 0 24 24" preserveAspectRatio="none"><path fill="#525a71" d="M18 8h-1V6c0-2.76-2.24-5-5-5S7 3.240 7 6v2H6c-1.100 0-2 .9-2 2v10c0 1.100.9 2 2 2h12c1.100 0 2-.9 2-2V10c0-1.100-.9-2-2-2zm-6 9c-1.100 0-2-.9-2-2s.9-2 2-2 2 .9 2 2-.9 2-2 2zm3.100-9H8.900V6c0-1.710 1.390-3.100 3.100-3.100 1.710 0 3.100 1.390 3.100 3.100v2z"/></svg>
<span style="position:absolute;top:580.02px;font-size:17.6px;line-height:17.6px;white-space:nowrap;color:#4d546a;right:981.17px;transform:scaleX(0.9785);transform-origin:right center">אבנר נר</span>
<span style="position:absolute;top:580.02px;font-size:17.6px;line-height:17.6px;white-space:nowrap;color:#4d546a;direction:ltr;right:1313.87px;transform:scaleX(1.0524);transform-origin:right center">11/12/23 15:50</span>
<span style="position:absolute;top:580.02px;font-size:17.6px;line-height:17.6px;white-space:nowrap;color:#4d546a;direction:ltr;right:1541.67px;transform:scaleX(1.0497);transform-origin:right center">78MB</span>
<div style="position:absolute;left:1535px;top:639px;width:18px;height:18px;border:2px solid #5f6679;border-radius:4.600px;box-sizing:border-box"></div>
<svg style="position:absolute;left:1487px;top:637px;" width="22" height="22" viewBox="0 0 22 22"><rect width="22" height="22" rx="3" fill="#ea4335"/><rect x=".5" y=".5" width="21" height="21" rx="2.600" fill="none" stroke="rgba(60,30,30,.16)"/><path d="M2.700 19.300 L6.800 13.500 L9.500 16.900 L13.400 12 L19.600 19.300 Z" fill="#fff"/></svg>
<span style="position:absolute;top:640.02px;font-size:17.6px;line-height:17.6px;white-space:nowrap;color:#4d546a;right:448.29px">הדלקת נר יחידתית</span>
<span style="position:absolute;top:640.02px;font-size:17.6px;line-height:17.6px;white-space:nowrap;color:#4d546a;right:980.72px;transform:scaleX(0.9846);transform-origin:right center">יאיר גולני</span>
<span style="position:absolute;top:640.02px;font-size:17.6px;line-height:17.6px;white-space:nowrap;color:#4d546a;direction:ltr;right:1313.73px;transform:scaleX(1.0380);transform-origin:right center">11/12/24 17:09</span>
<span style="position:absolute;top:640.02px;font-size:17.6px;line-height:17.6px;white-space:nowrap;color:#4d546a;direction:ltr;right:1541.72px;transform:scaleX(0.9928);transform-origin:right center">12MB</span>
<div style="position:absolute;left:1535px;top:699px;width:18px;height:18px;border:2px solid #5f6679;border-radius:4.600px;box-sizing:border-box"></div>
<svg style="position:absolute;left:1487px;top:697px;" width="22" height="22" viewBox="0 0 22 22"><rect width="22" height="22" rx="3" fill="#1dae95"/><rect x=".5" y=".5" width="21" height="21" rx="2.600" fill="none" stroke="rgba(60,30,30,.16)"/><path d="M3.800 9.400 H5.600 M6.900 9.400 H12.200 M13.400 9.400 H18.200" stroke="#fff" stroke-width="2"/><path d="M3.800 13.400 H5.600 M6.900 13.400 H12.200 M13.400 13.400 H18.200" stroke="#fff" stroke-width="1.500" opacity=".8"/></svg>
<span style="position:absolute;top:700.02px;font-size:17.6px;line-height:17.6px;white-space:nowrap;color:#4d546a;right:448.83px;transform:scaleX(0.9735);transform-origin:right center">נכס״ל יחידתי מעודכן</span>
<span style="position:absolute;top:700.02px;font-size:17.6px;line-height:17.6px;white-space:nowrap;color:#4d546a;right:980.18px;transform:scaleX(0.9975);transform-origin:right center">ראובן גרשוני</span>
<span style="position:absolute;top:700.02px;font-size:17.6px;line-height:17.6px;white-space:nowrap;color:#4d546a;direction:ltr;right:1313.69px;transform:scaleX(1.0735);transform-origin:right center">03/12/24 17:52</span>
<span style="position:absolute;top:700.02px;font-size:17.6px;line-height:17.6px;white-space:nowrap;color:#4d546a;direction:ltr;right:1541.64px;transform:scaleX(1.0722);transform-origin:right center">90MB</span>
<svg style="position:absolute;left:157.8px;top:698.6px;" width="20" height="20" viewBox="0 0 20 20"><path d="M2.900 6.900 A8 8 0 1 1 2.250 11.700" fill="none" stroke="#525a71" stroke-width="2" stroke-linecap="round"/><path d="M2 3 V7.400 H6.700" fill="none" stroke="#525a71" stroke-width="2" stroke-linecap="round" stroke-linejoin="round"/><path d="M10 5.800 V10.400 L12.900 13" fill="none" stroke="#525a71" stroke-width="2" stroke-linecap="round" stroke-linejoin="round"/></svg>
<div style="position:absolute;left:1535px;top:760px;width:18px;height:18px;border:2px solid #5f6679;border-radius:4.600px;box-sizing:border-box"></div>
<svg style="position:absolute;left:1487px;top:758px;" width="22" height="22" viewBox="0 0 22 22"><rect width="22" height="22" rx="3" fill="#1a7cf9"/><rect x=".5" y=".5" width="21" height="21" rx="2.600" fill="none" stroke="rgba(60,30,30,.16)"/><path d="M3.800 9.500 H12.200" stroke="#fff" stroke-width="2.100"/><path d="M3.800 13.700 H17.700" stroke="#fff" stroke-width="1.600" opacity=".8"/></svg>
<span style="position:absolute;top:761.02px;font-size:17.6px;line-height:17.6px;white-space:nowrap;color:#4d546a;right:448.88px;transform:scaleX(0.9817);transform-origin:right center">סיכום ביקור צוות סיגנל חצור</span>
<svg style="position:absolute;left:1240.1px;top:762.8px;" width="13.2" height="13.2" viewBox="0 0 20 20"><clipPath id="gc4"><circle cx="10" cy="10" r="9.600"/></clipPath><circle cx="10" cy="10" r="9.05" fill="none" stroke="#525a71" stroke-width="1.9"/><g clip-path="url(#gc4)" fill="#525a71"><path d="M12.300 -1 L11.500 2.900 Q11.200 4.100 10 4.150 L9.400 4.200 Q8.100 4.400 8.050 5.800 V7.800 H11.800 L12 9.300 Q12.300 10.900 13.700 10.900 H16.800 L21 6 V-1 Z"/><path d="M-1 10.100 H6.700 Q9.600 10.100 10.200 12.600 L10.450 14.750 H8 Q6.850 14.800 6.800 16 L6.700 21 H-1 Z"/></g></svg>
<svg style="position:absolute;left:1216.2px;top:762.55px" width="15.400" height="14.300" viewBox="0 0 24 24" preserveAspectRatio="none"><path fill="#525a71" d="M18 8h-1V6c0-2.76-2.24-5-5-5S7 3.240 7 6v2H6c-1.100 0-2 .9-2 2v10c0 1.100.9 2 2 2h12c1.100 0 2-.9 2-2V10c0-1.100-.9-2-2-2zm-6 9c-1.100 0-2-.9-2-2s.9-2 2-2 2 .9 2 2-.9 2-2 2zm3.100-9H8.900V6c0-1.710 1.390-3.100 3.100-3.100 1.710 0 3.100 1.390 3.100 3.100v2z"/></svg>
<svg style="position:absolute;left:1193.9px;top:761.85px;" width="16.6" height="16.6" viewBox="0 0 24 24"><path fill="#525a71" d="M12.00 2.50 L14.88 8.94 L21.89 9.69 L16.66 14.41 L18.11 21.31 L12.00 17.80 L5.89 21.31 L7.34 14.41 L2.11 9.69 L9.12 8.94z"/></svg>
<span style="position:absolute;top:761.02px;font-size:17.6px;line-height:17.6px;white-space:nowrap;color:#4d546a;right:980.69px;transform:scaleX(1.0075);transform-origin:right center">נטלי רינה</span>
<span style="position:absolute;top:761.02px;font-size:17.6px;line-height:17.6px;white-space:nowrap;color:#4d546a;direction:ltr;right:1313.78px;transform:scaleX(1.0748);transform-origin:right center">26/11/24 12:45</span>
<span style="position:absolute;top:761.02px;font-size:17.6px;line-height:17.6px;white-space:nowrap;color:#4d546a;direction:ltr;right:1541.65px;transform:scaleX(1.0704);transform-origin:right center">85MB</span>
<svg style="position:absolute;left:157.8px;top:759.6px;" width="20" height="20" viewBox="0 0 20 20"><path d="M2.900 6.900 A8 8 0 1 1 2.250 11.700" fill="none" stroke="#525a71" stroke-width="2" stroke-linecap="round"/><path d="M2 3 V7.400 H6.700" fill="none" stroke="#525a71" stroke-width="2" stroke-linecap="round" stroke-linejoin="round"/><path d="M10 5.800 V10.400 L12.900 13" fill="none" stroke="#525a71" stroke-width="2" stroke-linecap="round" stroke-linejoin="round"/></svg>
<div style="position:absolute;left:1535px;top:821px;width:18px;height:18px;border:2px solid #5f6679;border-radius:4.600px;box-sizing:border-box"></div>
<svg style="position:absolute;left:1487px;top:819px;" width="22" height="22" viewBox="0 0 22 22"><rect width="22" height="22" rx="3" fill="#1a7cf9"/><rect x=".5" y=".5" width="21" height="21" rx="2.600" fill="none" stroke="rgba(60,30,30,.16)"/><path d="M3.800 9.500 H12.200" stroke="#fff" stroke-width="2.100"/><path d="M3.800 13.700 H17.700" stroke="#fff" stroke-width="1.600" opacity=".8"/></svg>
<span style="position:absolute;top:822.02px;font-size:17.6px;line-height:17.6px;white-space:nowrap;color:#4d546a;right:448.32px;transform:scaleX(0.9707);transform-origin:right center">רציונל הצ׳אט המבצעי וביקורת משתמשים</span>
<svg style="position:absolute;left:1147px;top:823.8px;" width="13.2" height="13.2" viewBox="0 0 20 20"><clipPath id="gc5"><circle cx="10" cy="10" r="9.600"/></clipPath><circle cx="10" cy="10" r="9.05" fill="none" stroke="#525a71" stroke-width="1.9"/><g clip-path="url(#gc5)" fill="#525a71"><path d="M12.300 -1 L11.500 2.900 Q11.200 4.100 10 4.150 L9.400 4.200 Q8.100 4.400 8.050 5.800 V7.800 H11.800 L12 9.300 Q12.300 10.900 13.700 10.900 H16.800 L21 6 V-1 Z"/><path d="M-1 10.100 H6.700 Q9.600 10.100 10.200 12.600 L10.450 14.750 H8 Q6.850 14.800 6.800 16 L6.700 21 H-1 Z"/></g></svg>
<svg style="position:absolute;left:1121.3px;top:822.85px;" width="16.6" height="16.6" viewBox="0 0 24 24"><path fill="#525a71" d="M12.00 2.50 L14.88 8.94 L21.89 9.69 L16.66 14.41 L18.11 21.31 L12.00 17.80 L5.89 21.31 L7.34 14.41 L2.11 9.69 L9.12 8.94z"/></svg>
<span style="position:absolute;top:822.02px;font-size:17.6px;line-height:17.6px;white-space:nowrap;color:#4d546a;right:980.98px;transform:scaleX(1.0034);transform-origin:right center">שרון לורם</span>
<span style="position:absolute;top:822.02px;font-size:17.6px;line-height:17.6px;white-space:nowrap;color:#4d546a;direction:ltr;right:1313.85px;transform:scaleX(1.0820);transform-origin:right center">03/11/24 12:50</span>
<span style="position:absolute;top:822.02px;font-size:17.6px;line-height:17.6px;white-space:nowrap;color:#4d546a;direction:ltr;right:1541.67px;transform:scaleX(1.0497);transform-origin:right center">78MB</span>
<svg style="position:absolute;left:157.8px;top:820.6px;" width="20" height="20" viewBox="0 0 20 20"><path d="M2.900 6.900 A8 8 0 1 1 2.250 11.700" fill="none" stroke="#525a71" stroke-width="2" stroke-linecap="round"/><path d="M2 3 V7.400 H6.700" fill="none" stroke="#525a71" stroke-width="2" stroke-linecap="round" stroke-linejoin="round"/><path d="M10 5.800 V10.400 L12.900 13" fill="none" stroke="#525a71" stroke-width="2" stroke-linecap="round" stroke-linejoin="round"/></svg>
<div style="position:absolute;left:1535px;top:882px;width:18px;height:18px;border:2px solid #5f6679;border-radius:4.600px;box-sizing:border-box"></div>
<svg style="position:absolute;left:1487px;top:880px;" width="22" height="22" viewBox="0 0 22 22"><rect width="22" height="22" rx="3" fill="#ea4335"/><rect x=".5" y=".5" width="21" height="21" rx="2.600" fill="none" stroke="rgba(60,30,30,.16)"/><path d="M2.700 19.300 L6.800 13.500 L9.500 16.900 L13.400 12 L19.600 19.300 Z" fill="#fff"/></svg>
<span style="position:absolute;top:883.02px;font-size:17.6px;line-height:17.6px;white-space:nowrap;color:#4d546a;right:448.30px;transform:scaleX(0.9942);transform-origin:right center">הנחיות לפתיחת תקלה</span>
<span style="position:absolute;top:883.02px;font-size:17.6px;line-height:17.6px;white-space:nowrap;color:#4d546a;right:980.98px;transform:scaleX(1.0034);transform-origin:right center">שרון לורם</span>
<span style="position:absolute;top:883.02px;font-size:17.6px;line-height:17.6px;white-space:nowrap;color:#4d546a;direction:ltr;right:1313.77px;transform:scaleX(1.0855);transform-origin:right center">11/10/24 09:45</span>
<span style="position:absolute;top:883.02px;font-size:17.6px;line-height:17.6px;white-space:nowrap;color:#4d546a;direction:ltr;right:1541.66px;transform:scaleX(1.0561);transform-origin:right center">23MB</span>
<div style="position:absolute;left:1535px;top:943px;width:18px;height:18px;border:2px solid #5f6679;border-radius:4.600px;box-sizing:border-box"></div>
<div style="position:absolute;left:1487px;top:941px;width:22px;height:22px;border-radius:3.500px;background:#fd5f49;box-shadow:inset 0 0 0 1px rgba(120,60,50,.22)"></div>
<span style="position:absolute;top:949.03px;font-size:8.2px;line-height:8.2px;white-space:nowrap;color:#fff;font-weight:700;-webkit-text-stroke:0.25px #fff;direction:ltr;right:414.80px;transform:scaleX(0.8562);transform-origin:right center">PDF</span>
<span style="position:absolute;top:944.02px;font-size:17.6px;line-height:17.6px;white-space:nowrap;color:#4d546a;right:449.09px;transform:scaleX(0.9775);transform-origin:right center">שיתוף הרשאה מרובה</span>
<span style="position:absolute;top:944.02px;font-size:17.6px;line-height:17.6px;white-space:nowrap;color:#4d546a;right:980.18px;transform:scaleX(0.9975);transform-origin:right center">ראובן גרשוני</span>
<span style="position:absolute;top:944.02px;font-size:17.6px;line-height:17.6px;white-space:nowrap;color:#4d546a;direction:ltr;right:1313.77px;transform:scaleX(1.0918);transform-origin:right center">02/10/24 15:55</span>
<span style="position:absolute;top:944.02px;font-size:17.6px;line-height:17.6px;white-space:nowrap;color:#4d546a;direction:ltr;right:1541.72px;transform:scaleX(0.9928);transform-origin:right center">12MB</span>
<div style="position:absolute;left:1535px;top:1003px;width:18px;height:18px;border:2px solid #5f6679;border-radius:4.600px;box-sizing:border-box"></div>
<div style="position:absolute;left:1487px;top:1001px;width:22px;height:22px;border-radius:3.500px;background:#fd5f49;box-shadow:inset 0 0 0 1px rgba(120,60,50,.22)"></div>
<span style="position:absolute;top:1009.03px;font-size:8.2px;line-height:8.2px;white-space:nowrap;color:#fff;font-weight:700;-webkit-text-stroke:0.25px #fff;direction:ltr;right:414.80px;transform:scaleX(0.8562);transform-origin:right center">PDF</span>
<span style="position:absolute;top:1004.02px;font-size:17.6px;line-height:17.6px;white-space:nowrap;color:#4d546a;right:448.79px;transform:scaleX(1.0133);transform-origin:right center">ניהול ערכים</span>
<span style="position:absolute;top:1004.02px;font-size:17.6px;line-height:17.6px;white-space:nowrap;color:#4d546a;right:980.98px;transform:scaleX(1.0034);transform-origin:right center">שרון לורם</span>
<span style="position:absolute;top:1004.02px;font-size:17.6px;line-height:17.6px;white-space:nowrap;color:#4d546a;direction:ltr;right:1313.68px;transform:scaleX(1.1009);transform-origin:right center">25/09/24 11:09</span>
<span style="position:absolute;top:1004.02px;font-size:17.6px;line-height:17.6px;white-space:nowrap;color:#4d546a;direction:ltr;right:1541.70px;transform:scaleX(1.0160);transform-origin:right center">67MB</span>
</div></body></html>
